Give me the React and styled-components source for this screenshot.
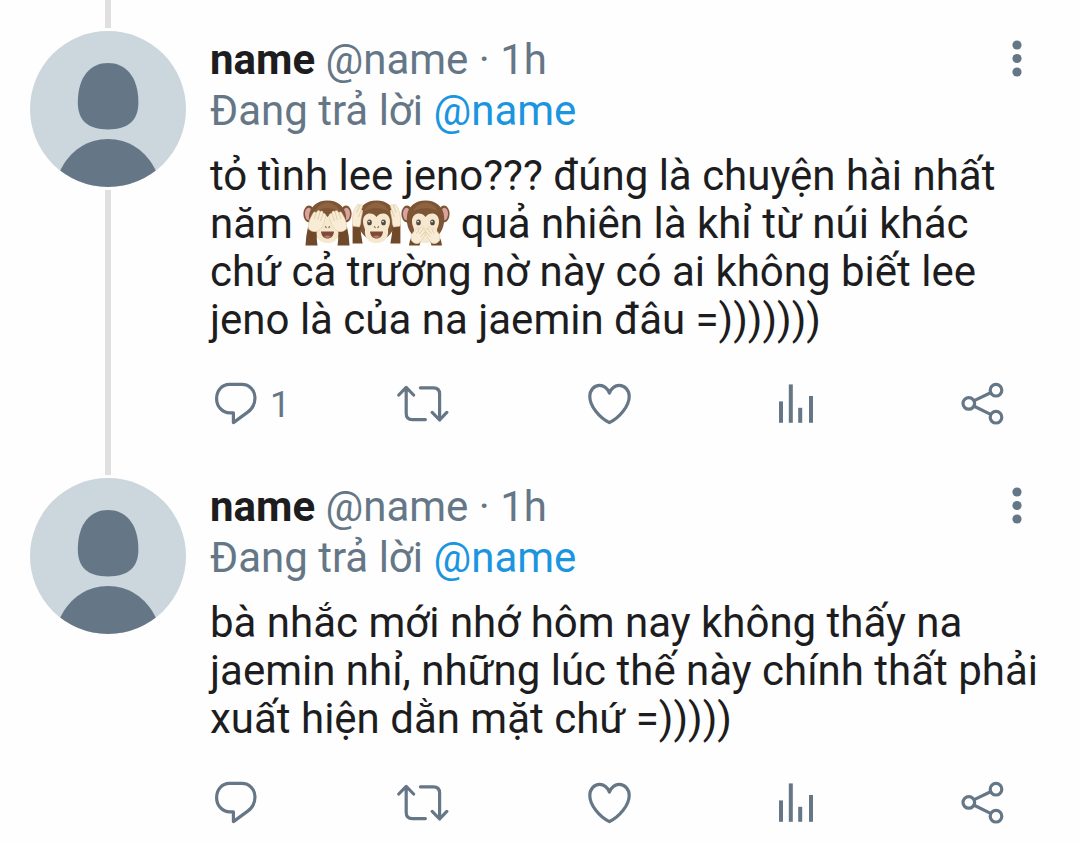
import React from 'react'
import styled, { createGlobalStyle } from 'styled-components'

const posts = [
    {
        id: 1,
        replies: 1,
        continues: true,
        text: (
            <>
                tỏ tình lee jeno??? đúng là chuyện hài nhất năm <SeeNoEvil /><HearNoEvil /><SpeakNoEvil /> quả
                nhiên là khỉ từ núi khác chứ cả trường nờ này có ai không biết lee jeno là của na jaemin đâu =)))))))
            </>
        ),
    },
    {
        id: 2,
        replies: null,
        continues: false,
        text: 'bà nhắc mới nhớ hôm nay không thấy na jaemin nhỉ, những lúc thế này chính thất phải xuất hiện dằn mặt chứ =)))))',
    },
]

function App() {
    return (
        <>
            <GlobalStyle />
            <Thread>
                {posts.map((post) => (
                    <Post key={post.id} post={post} />
                ))}
            </Thread>
        </>
    )
}

function Post({ post }) {
    return (
        <StyledPost>
            <Rail>
                <RailTop />
                <Avatar />
                {post.continues && <RailBottom />}
            </Rail>
            <Content>
                <Header>
                    <div>
                        <Name>name</Name> <span>@name · 1h</span>
                    </div>
                    <MoreButton type="button" aria-label="Thêm">
                        <svg width="12" height="40" viewBox="0 0 12 40" fill="currentColor">
                            <circle cx="6" cy="5" r="4.6" />
                            <circle cx="6" cy="18.5" r="4.6" />
                            <circle cx="6" cy="32" r="4.6" />
                        </svg>
                    </MoreButton>
                </Header>
                <ReplyingTo>
                    Đang trả lời <a href="#name">@name</a>
                </ReplyingTo>
                <Body>{post.text}</Body>
                <Actions>
                    <ActionButton type="button" aria-label="Trả lời">
                        <Icon>
                            <path d="M19.4 3.4H31.9C39.4 3.4 45 9.4 45 16.8C45 22.8 42.2 28 37.4 31.4L23.4 41.6V31.8H19.9C12.2 31.8 6.6 25.4 6.6 17.4C6.6 9.6 12 3.4 19.4 3.4Z" />
                        </Icon>
                        {post.replies && <Count>{post.replies}</Count>}
                    </ActionButton>
                    <ActionButton type="button" aria-label="Đăng lại">
                        <Icon>
                            <path d="M1.8 14L9.2 6.4L16.6 14M9.2 7V32.5Q9.2 38.6 15.4 38.6H28.4" />
                            <path d="M23.4 6.8H36.4Q42.6 6.8 42.6 13V38.6M35.2 31.4L42.6 39L49.8 31.4" />
                        </Icon>
                    </ActionButton>
                    <ActionButton type="button" aria-label="Thích">
                        <Icon>
                            <path d="M25.4 12C23.2 7 19.6 4.4 15.6 4.4C10 4.4 5.8 9.2 5.8 15.4C5.8 25.4 15.8 37 25.4 41.6C35 37 45.2 25.4 45.2 15.4C45.2 9.2 40.8 4.4 35.2 4.4C31.2 4.4 27.6 7 25.4 12Z" />
                        </Icon>
                    </ActionButton>
                    <ActionButton type="button" aria-label="Số liệu">
                        <Icon>
                            <g fill="currentColor" stroke="none">
                                <rect x="9" y="20.4" width="4" height="21.4" />
                                <rect x="18.8" y="3.4" width="4" height="38.4" />
                                <rect x="28.2" y="26.8" width="4" height="15" />
                                <rect x="39" y="15" width="4" height="26.8" />
                            </g>
                        </Icon>
                    </ActionButton>
                    <ActionButton type="button" aria-label="Chia sẻ">
                        <Icon>
                            <circle cx="11.8" cy="22.4" r="5.8" />
                            <circle cx="39" cy="9.2" r="5.8" />
                            <circle cx="39" cy="36.2" r="5.8" />
                            <path d="M17.2 19.6L33.6 11.8M17.2 25.2L33.6 33.4" />
                        </Icon>
                    </ActionButton>
                </Actions>
            </Content>
        </StyledPost>
    )
}

function Avatar() {
    return (
        <StyledAvatar viewBox="0 0 156 156" role="img" aria-label="name">
            <rect width="156" height="156" fill="#ccd6dd" />
            <g fill="#657786">
                <path d="M78 32C95 32 108.4 45 108.4 71.5C108.4 89.5 98 98.4 78 98.4C58 98.4 47.8 89.5 47.8 71.5C47.8 45 61 32 78 32Z" />
                <path d="M30 140C40 119 58 108 78 108C98 108 116 119 126 140V156H30Z" />
            </g>
        </StyledAvatar>
    )
}

function Icon({ children }) {
    return (
        <svg width="52" height="44" viewBox="0 0 52 44" fill="none" stroke="currentColor" strokeWidth="3.2" strokeLinecap="round" strokeLinejoin="round">
            {children}
        </svg>
    )
}

function MonkeyHead() {
    return (
        <>
            <path d="M24.5 0.5C35 0.5 42 6.5 43 16C44 25 41 33 34 38H15C8 33 5 25 6 16C7 6.5 14 0.5 24.5 0.5Z" fill="#7d5434" />
            <path d="M12 12C14 6 20 2.5 24.5 2.5C29 2.5 35 6 37 12C32 7 17 7 12 12Z" fill="#8d6340" />
            <path d="M24.5 17C20.5 11.5 11 12.5 11 21.5C11 25 12.5 27 13 29.5C12 37 16 43 24.5 43C33 43 37 37 36 29.5C36.5 27 38 25 38 21.5C38 12.5 28.5 11.5 24.5 17Z" fill="#f6e7cf" />
        </>
    )
}

function MonkeyEars() {
    return (
        <>
            <ellipse cx="6" cy="14" rx="5.6" ry="8.4" fill="#7d5434" />
            <ellipse cx="43" cy="14" rx="5.6" ry="8.4" fill="#7d5434" />
            <ellipse cx="5.6" cy="14" rx="3.6" ry="6.2" fill="#d9a3a0" />
            <ellipse cx="43.4" cy="14" rx="3.6" ry="6.2" fill="#d9a3a0" />
        </>
    )
}

function MonkeyMouth() {
    return (
        <>
            <path d="M22.4 26.5L23.2 27.6M26.6 26.5L25.8 27.6" stroke="#7a6a58" strokeWidth="1.1" strokeLinecap="round" />
            <path d="M18 31.6H31C30.6 36 28 38.6 24.5 38.6C21 38.6 18.4 36 18 31.6Z" fill="#7f4a38" />
            <path d="M21 36.6Q24.5 34.6 28 36.6Q24.5 39.6 21 36.6Z" fill="#b87a68" />
        </>
    )
}

function MonkeyEyes() {
    return (
        <>
            <ellipse cx="17.5" cy="22.4" rx="2.3" ry="2.9" fill="#55483d" />
            <ellipse cx="31.5" cy="22.4" rx="2.3" ry="2.9" fill="#55483d" />
            <circle cx="17" cy="21.6" r="0.8" fill="#fff" />
            <circle cx="31" cy="21.6" r="0.8" fill="#fff" />
        </>
    )
}

function SeeNoEvil() {
    return (
        <Emoji viewBox="0 0 49 48" role="img" aria-label="🙈">
            <MonkeyEars />
            <MonkeyHead />
            <MonkeyMouth />
            <SeeArm />
            <g transform="translate(49 0) scale(-1 1)">
                <SeeArm />
            </g>
        </Emoji>
    )
}

function SeeArm() {
    return (
        <>
            <path d="M5 27L14 30Q13 35 14.5 45.5H2.5Q3 35 5 27Z" fill="#70492b" />
            <path d="M5.5 29C5 25 6 21 7.5 18L10.5 12.5Q12.4 11 13 13L14.6 10.8Q17 9.8 17 12L18.4 11Q20.4 11 20 13.6L21.6 13.6Q23.4 14.4 22.6 17L20.4 24.4C18.6 28.4 16.4 30 13.6 31.6Q9 32.6 5.5 29Z" fill="#f8ecd6" stroke="#e0cba6" strokeWidth="0.6" />
            <path d="M13 13L11.2 19M17 12L14.6 20M20 13.6L17.6 21" stroke="#d6bf97" strokeWidth="0.7" />
        </>
    )
}

function HearNoEvil() {
    return (
        <Emoji viewBox="0 0 49 48" role="img" aria-label="🙉">
            <MonkeyHead />
            <MonkeyEyes />
            <MonkeyMouth />
            <HearArm />
            <g transform="translate(49 0) scale(-1 1)">
                <HearArm />
            </g>
        </Emoji>
    )
}

function HearArm() {
    return (
        <>
            <path d="M0.6 24H8.4Q8.6 35 10.6 43.5H0.6Z" fill="#70492b" />
            <path d="M0.6 26C0 20 0.6 13 2.6 9L5.4 4.6Q7.6 3.6 7.6 5.4L9.4 4.6Q11 5.4 10.2 7.6L9.4 9.6Q11.2 10 10.4 12.6L9 19Q8.8 25 7.4 27Z" fill="#f8ecd6" stroke="#e0cba6" strokeWidth="0.6" />
            <path d="M7.6 5.4L4.6 13M9.4 9.6L6.6 17" stroke="#d6bf97" strokeWidth="0.7" />
        </>
    )
}

function SpeakNoEvil() {
    return (
        <Emoji viewBox="0 0 49 48" role="img" aria-label="🙊">
            <MonkeyEars />
            <MonkeyHead />
            <MonkeyEyes />
            <SpeakArm />
            <g transform="translate(49 0) scale(-1 1)">
                <SpeakArm />
            </g>
        </Emoji>
    )
}

function SpeakArm() {
    return (
        <>
            <path d="M10 38L20 40L18.5 45.5H8Q8.4 41 10 38Z" fill="#70492b" />
            <path d="M10.6 41Q9 36 12 32.6L16.4 28Q18.2 27.4 18 29.6L20.4 27Q22.4 26.6 22 29L23.4 28.6Q25 29.6 23.8 32L24.2 34Q23.6 36.4 21.4 39L18.6 43Q14 45 10.6 41Z" fill="#f8ecd6" stroke="#e0cba6" strokeWidth="0.6" />
            <path d="M18 29.6L15.6 33.6M22 29L18.4 34M23.8 32L19.6 37" stroke="#d6bf97" strokeWidth="0.7" />
        </>
    )
}

const GlobalStyle = createGlobalStyle`
    * {
        box-sizing: border-box;
    }
    body {
        margin: 0;
        background: #fefefe;
        color: #1d1d1f;
        font-family: Roboto, "Noto Sans", sans-serif;
        font-size: 42px;
        line-height: 48px;
    }
    button {
        padding: 0;
        border: 0;
        background: none;
        color: #657786;
        font: inherit;
        cursor: pointer;
    }
    svg {
        display: block;
    }
`

const Thread = styled.main`
    padding: 0 36px 0 30px;
`

const StyledPost = styled.article`
    display: flex;
    gap: 24px;
`

const Rail = styled.div`
    display: flex;
    flex-direction: column;
    align-items: center;
    flex: none;
    gap: 3px;
`

const RailTop = styled.div`
    width: 6px;
    height: 28px;
    background: #e0e0e0;
`

const RailBottom = styled(RailTop)`
    flex: 1;
`

const StyledAvatar = styled.svg`
    width: 156px;
    height: 156px;
    border-radius: 50%;
`

const Content = styled.div`
    flex: 1;
    min-width: 0;
    padding: 34px 0 21px;
`

const Header = styled.header`
    display: flex;
    justify-content: space-between;
    color: #657786;
    line-height: 51px;
`

const Name = styled.strong`
    color: #1d1d1f;
    font-weight: 700;
`

const MoreButton = styled.button`
    display: flex;
    align-items: center;
    justify-content: center;
    width: 54px;
`

const ReplyingTo = styled.div`
    color: #657786;
    line-height: 51px;
    a {
        color: #1b95e0;
        text-decoration: none;
    }
`

const Body = styled.p`
    margin: 16px 0 36px;
`

const Emoji = styled.svg`
    display: inline-block;
    width: 49px;
    height: 48px;
    vertical-align: -10px;
`

const Actions = styled.div`
    display: grid;
    grid-template-columns: repeat(4, 1fr) 52px;
    margin-right: 35px;
`

const ActionButton = styled.button`
    display: flex;
    align-items: center;
    gap: 8px;
    height: 46px;
    font-size: 36px;
`

const Count = styled.span`
    padding-top: 4px;
`

export default App
